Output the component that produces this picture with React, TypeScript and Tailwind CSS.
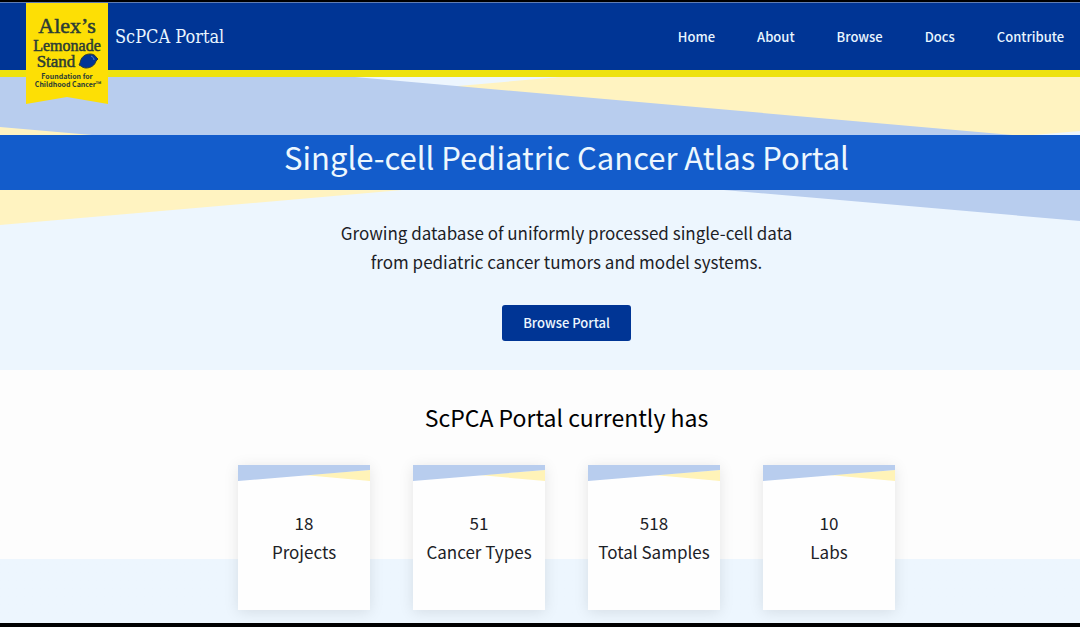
const navLinks = ['Home', 'About', 'Browse', 'Docs', 'Contribute']

const stats = [
  { value: 18, label: 'Projects' },
  { value: 51, label: 'Cancer Types' },
  { value: 518, label: 'Total Samples' },
  { value: 10, label: 'Labs' },
]

function Logo() {
  return (
    <svg
      viewBox="0 0 82 101"
      className="h-[101px] w-[82px] shrink-0"
      role="img"
      aria-label="Alex's Lemonade Stand Foundation for Childhood Cancer"
    >
      <path d="M0 0H82V101L41 94L0 101Z" fill="#fddf05" />
      <g
        fill="#2b3c35"
        stroke="#2b3c35"
        strokeWidth="0.5"
        textAnchor="middle"
        fontFamily="'Liberation Serif', serif"
      >
        <text x="41" y="30" fontSize="22">Alex’s</text>
        <text x="41" y="48" fontSize="16">Lemonade</text>
        <text x="30" y="64" fontSize="17">Stand</text>
      </g>
      {/* lemon */}
      <path
        d="M54 60C55 54 59 51 64 51C67 51 69 52 70 54L72 56L70 58C69 62 65 65 60 65C58 65 56 64 55 63L53 62Z"
        fill="#003595"
        stroke="#2b3c35"
        strokeWidth="1"
      />
      <path d="M65 53C67 54 68 55 68 57" fill="none" stroke="#9db6dd" strokeWidth="0.6" />
      <g
        fill="#2b3c35"
        fontSize="7"
        fontWeight="700"
        textAnchor="middle"
        fontFamily="'Noto Sans CJK SC', sans-serif"
      >
        <text x="41" y="76">Foundation for</text>
        <text x="42" y="84">Childhood Cancer™</text>
      </g>
    </svg>
  )
}

function Header() {
  return (
    <header className="relative z-10 flex h-[75px] justify-between border-t border-b-[7px] border-t-[#5f7db4] border-b-[#eee20f] bg-[#003595] pr-4 pl-[26px] text-[#e9f5ff]">
      <div className="flex items-start gap-[7px]">
        <Logo />
        <a
          href="#"
          className="pt-[22px] font-['DejaVu_Serif_Condensed','DejaVu_Serif',serif] text-lg leading-6 whitespace-nowrap"
        >
          ScPCA Portal
        </a>
      </div>
      <nav className="flex items-center gap-[42px] text-[13px] font-medium">
        {navLinks.map((link) => (
          <a key={link} href="#">
            {link}
          </a>
        ))}
      </nav>
    </header>
  )
}

function Hero() {
  return (
    <section className="relative bg-[#edf6fe] pt-[58px] pb-[29px]">
      <svg
        viewBox="0 0 1080 293"
        preserveAspectRatio="none"
        className="absolute inset-0 h-full w-full"
        aria-hidden="true"
      >
        <path d="M0 49L560 0H1080V54L0 148Z" fill="#fff3c1" />
        <path d="M0 0H355L1080 64V144L0 50Z" fill="#b8cdee" />
      </svg>
      <div className="relative text-center">
        <h1 className="bg-[#135ccb] pb-[11px] pl-[53px] text-[31px] leading-[44px] text-[#edf7fe]">
          Single-cell Pediatric Cancer Atlas Portal
        </h1>
        <div className="pt-7 pl-[53px]">
          <p className="text-[17px] leading-[29px] text-[#1c2126]">
            Growing database of uniformly processed single-cell data
            <br />
            from pediatric cancer tumors and model systems.
          </p>
          <button
            type="button"
            className="mt-[29px] h-9 rounded-[3px] bg-[#003595] px-[21px] text-[13px] font-medium text-[#edf7fe]"
          >
            Browse Portal
          </button>
        </div>
      </div>
    </section>
  )
}

function StatCard({ value, label }: { value: number; label: string }) {
  return (
    <div className="h-[145px] w-[132px] bg-[#fefefe] shadow-[0_2px_14px_rgba(0,0,0,0.1)]">
      <svg viewBox="0 0 132 16" preserveAspectRatio="none" className="h-4 w-full" aria-hidden="true">
        <path d="M66 10L132 5V16Z" fill="#fff3b8" />
        <path d="M0 0H132V5L0 16Z" fill="#b8cdee" />
      </svg>
      <p className="pt-[27px] text-center text-[17px] leading-[29px] whitespace-nowrap">
        {value}
        <br />
        {label}
      </p>
    </div>
  )
}

function Stats() {
  return (
    <section className="grow bg-linear-to-b from-[#fdfdfd] from-[189px] to-[#edf6fe] to-[189px] pt-[31px] pb-[13px] pl-[53px] text-[#1c2126]">
      <h2 className="text-center text-[23px] leading-8 text-black">ScPCA Portal currently has</h2>
      <div className="mt-8 flex justify-center gap-[43px]">
        {stats.map((stat) => (
          <StatCard key={stat.label} value={stat.value} label={stat.label} />
        ))}
      </div>
    </section>
  )
}

export default function App() {
  return (
    <div className="flex min-h-screen flex-col border-t-2 border-b-4 border-black bg-white font-['Noto_Sans_CJK_SC',sans-serif]">
      <Header />
      <Hero />
      <Stats />
    </div>
  )
}
